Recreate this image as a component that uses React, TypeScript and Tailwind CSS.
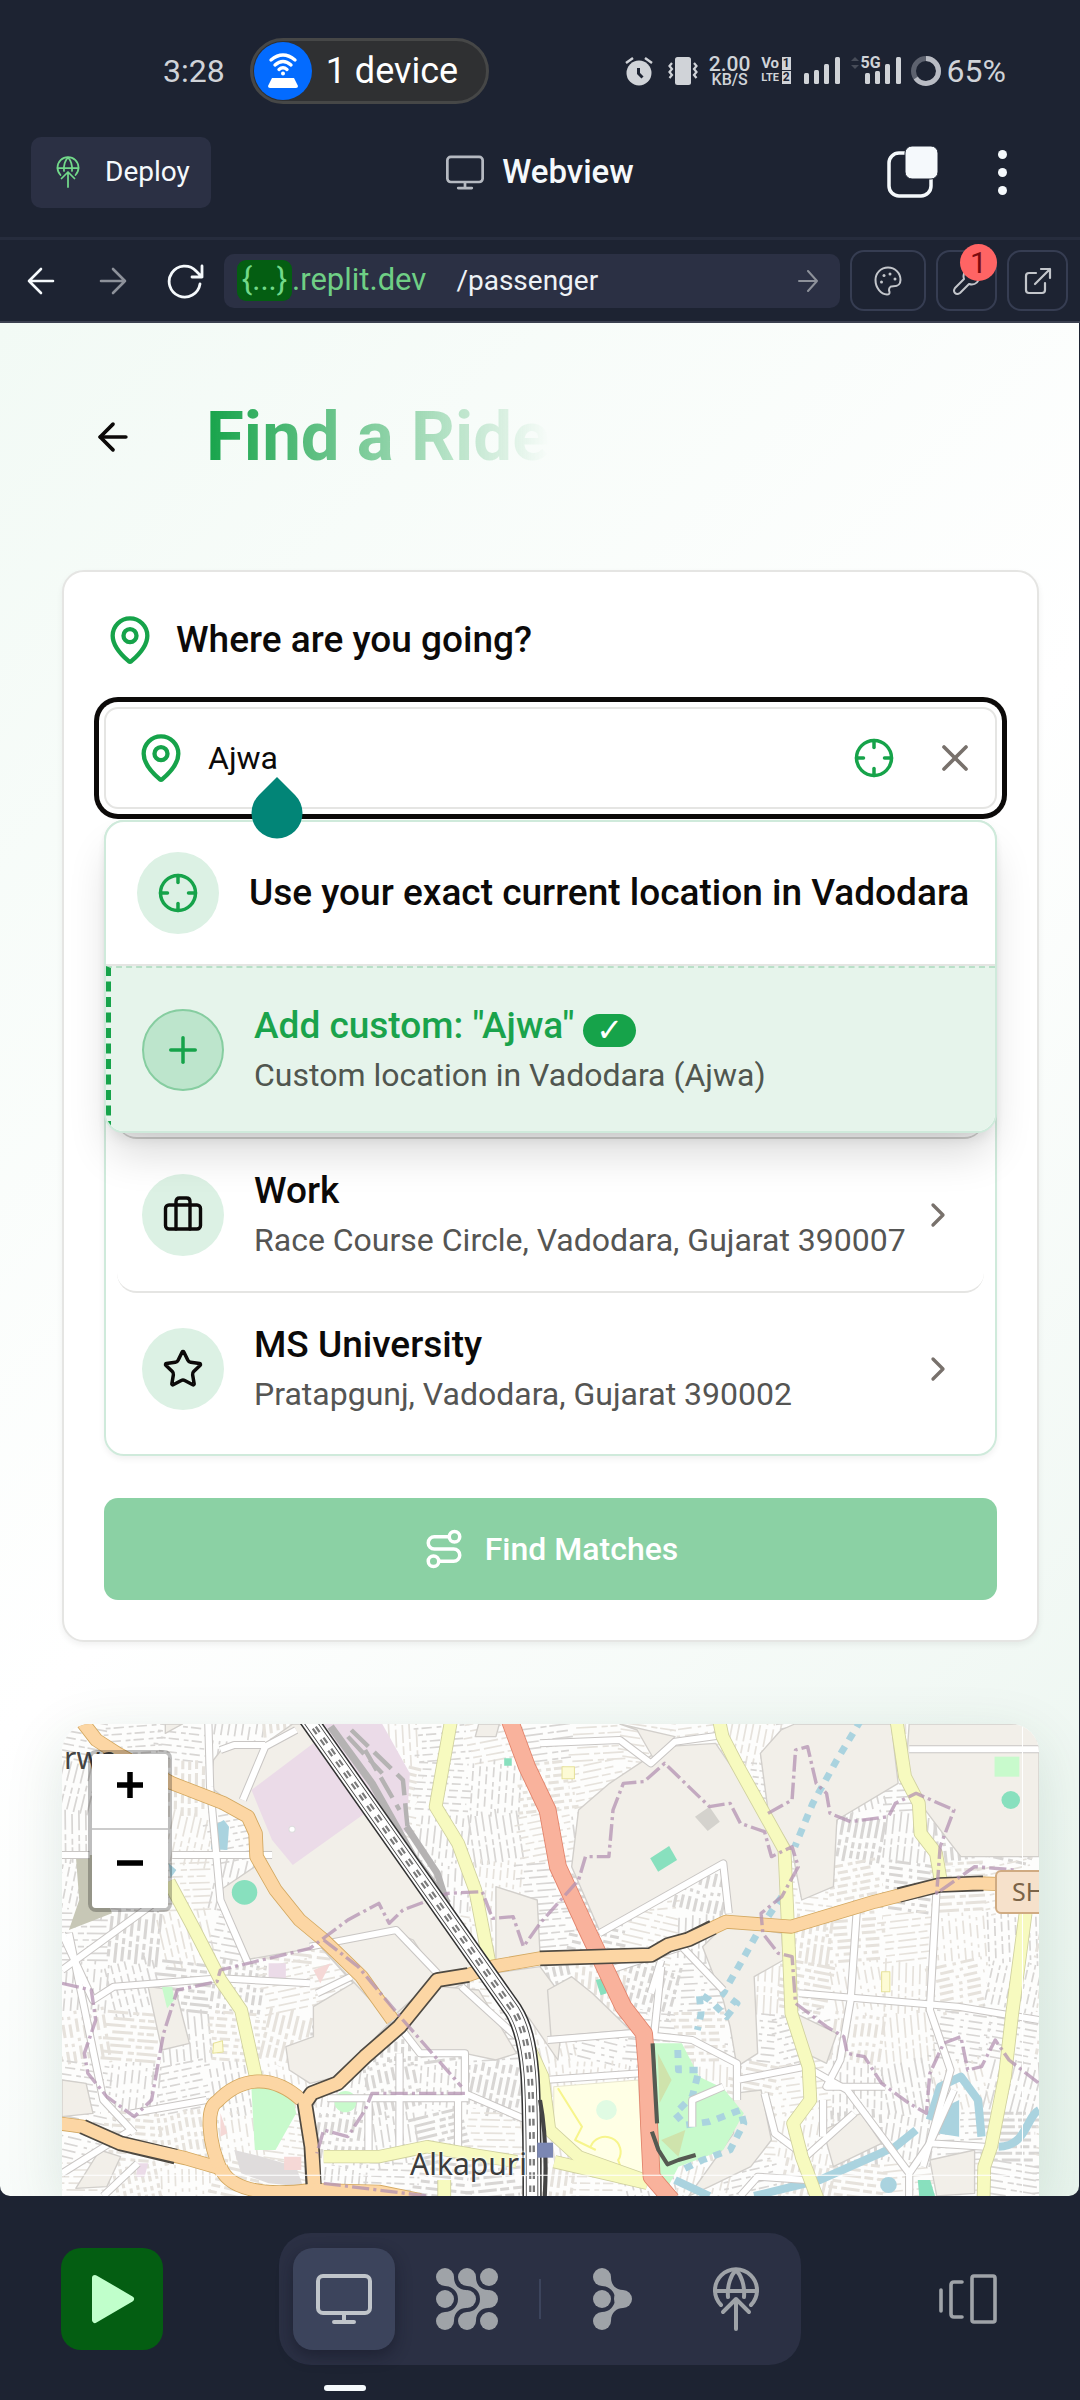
import React from "react";
import {
  ArrowLeft,
  ChevronRight,
  Crosshair,
  MapPin,
  Plus,
  Route,
  Star,
  X,
} from "lucide-react";

/* ---------- icons ---------- */

function MonitorIcon({ className }: { className?: string }) {
  return (
    <svg viewBox="0 0 56 50" className={className} fill="none" stroke="currentColor" strokeWidth="4" strokeLinecap="round">
      <rect x="2" y="2" width="52" height="37" rx="5" />
      <path d="M28 40v7M18 48h20" />
    </svg>
  );
}

function GlobeUpIcon({ className, strokeWidth = 4 }: { className?: string; strokeWidth?: number }) {
  return (
    <svg viewBox="0 0 48 64" className={className} fill="none" stroke="currentColor" strokeWidth={strokeWidth} strokeLinecap="round" strokeLinejoin="round">
      <path d="M9 38A21 21 0 1 1 39 38" />
      <path d="M3 24H45" />
      <path d="M16 30C15 18 19 8 24 3C29 8 33 18 32 30" />
      <path d="M24 62V32M11 45L24 32L37 45" />
    </svg>
  );
}

const FORK = "M18 9C18 18 24 22 30 22V40C24 40 18 44 18 53H9V44A13 13 0 0 0 9 18V9Z";

function ForkIcon() {
  return (
    <svg viewBox="0 0 40 62" className="h-[62px] w-[40px]" fill="currentColor">
      <path d={FORK} />
      <circle cx="9" cy="9" r="9" />
      <circle cx="9" cy="31" r="9" />
      <circle cx="9" cy="53" r="9" />
      <circle cx="30" cy="31" r="9" />
    </svg>
  );
}

function AgentIcon() {
  return (
    <svg viewBox="0 0 62 62" className="h-[62px] w-[62px]" fill="currentColor">
      <path d={FORK} />
      <path d={FORK} transform="translate(22 0)" />
      {[9, 31, 53].map((x) => [9, 31, 53].map((y) => <circle key={x + "-" + y} cx={x} cy={y} r="9" />))}
    </svg>
  );
}

function HotspotIcon() {
  return (
    <svg viewBox="0 0 56 58" className="h-[58px] w-[58px]" fill="none" stroke="#fff" strokeWidth="3.4" strokeLinecap="round">
      <path d="M16 18Q28 8 40 18M20 23Q28 16 36 23M24 27.500Q28 24 32 27.500" />
      <circle cx="28" cy="31.500" r="2" fill="#fff" stroke="none" />
      <path d="M17 36h22l4 8q0 2-2 2H15q-2 0-2-2z" fill="#fff" stroke="none" />
    </svg>
  );
}

function SignalBars() {
  return (
    <svg viewBox="0 0 36 28" className="h-[28px] w-[36px]" fill="currentColor">
      <rect x="0" y="16" width="5" height="11" rx="1.500" />
      <rect x="10" y="13" width="5" height="14" rx="1.500" />
      <rect x="20" y="7" width="5" height="20" rx="1.500" />
      <rect x="31" y="0" width="5" height="27" rx="1.500" />
    </svg>
  );
}

function SuitcaseIcon() {
  return (
    <svg viewBox="0 0 42 42" className="size-[42px]" fill="none" stroke="currentColor" strokeWidth="3.400" strokeLinecap="round" strokeLinejoin="round">
      <rect x="3.500" y="11" width="35" height="24" rx="3.500" />
      <path d="M14 35V7.500Q14 4 17.500 4H24.500Q28 4 28 7.500V35" />
    </svg>
  );
}

/* ---------- phone status bar ---------- */

function StatusBar() {
  return (
    <div className="flex h-[107px] shrink-0 items-center pt-[34px] pr-[74px] pl-[163px] text-[#d0d3d8]">
      <span className="text-[32px] leading-[40px]">3:28</span>
      <div className="ml-[25px] flex h-[66px] items-center rounded-full border-[3px] border-[#464747] bg-[#2f3032] pr-[28px] pl-[1px]">
        <span className="rounded-full bg-[#036bff]">
          <HotspotIcon />
        </span>
        <span className="ml-[14px] text-[36px] leading-[44px] whitespace-nowrap text-white">1 device</span>
      </div>
      <div className="ml-auto flex items-center whitespace-nowrap">
        <svg viewBox="0 0 28 30" className="h-[30px] w-[28px]" fill="none">
          <circle cx="14" cy="17" r="12.500" fill="currentColor" />
          <path d="M1 7L8 2M27 7L20 2" stroke="currentColor" strokeWidth="2.500" />
          <path d="M13.500 12v5.500l4 4" stroke="#1d2332" strokeWidth="3" />
        </svg>
        <svg viewBox="0 0 30 30" className="ml-[15px] h-[30px] w-[30px]" fill="none" stroke="currentColor" strokeWidth="2.200">
          <rect x="7" y="1" width="16" height="28" rx="2.500" fill="currentColor" stroke="none" />
          <path d="M4 7L1.500 10L4 13L1.500 16L4 19L1.500 22M26 7l2.500 3L26 13l2.500 3L26 19l2.500 3" />
        </svg>
        <div className="ml-[10px] flex w-[44px] flex-col items-center font-medium">
          <span className="text-[21px] leading-[18px]">2.00</span>
          <span className="text-[16px] leading-[14px]">KB/S</span>
        </div>
        <div className="ml-[9px] grid grid-cols-[19px_9px] gap-x-[2px] gap-y-[1px] text-center leading-[13px] font-bold">
          <span className="text-[15px]">Vo</span>
          <span className="bg-[#d0d3d8] text-[12px] text-[#1d2332]">1</span>
          <span className="flex justify-center text-[11px]">LTE</span>
          <span className="bg-[#d0d3d8] text-[12px] text-[#1d2332]">2</span>
        </div>
        <span className="ml-[13px]">
          <SignalBars />
        </span>
        <div className="relative ml-[25px]">
          <svg viewBox="0 0 36 28" className="h-[28px] w-[36px]" fill="currentColor">
            <rect x="0" y="16" width="5" height="11" rx="1.500" />
            <rect x="10" y="14" width="5" height="13" rx="1.500" />
            <rect x="20" y="7" width="5" height="20" rx="1.500" />
            <rect x="31" y="0" width="5" height="27" rx="1.500" />
          </svg>
          <span className="absolute -top-[2px] -left-[4px] text-[16px] leading-[16px] font-bold">5G</span>
          <svg viewBox="0 0 8 12" className="absolute top-[0px] -left-[14px] h-[12px] w-[8px]" fill="#474c58">
            <path d="M4 0L8 4H0ZM4 12L8 8H0Z" />
          </svg>
        </div>
        <svg viewBox="0 0 30 30" className="ml-[10px] h-[30px] w-[30px] -rotate-90" fill="none" strokeWidth="5">
          <circle cx="15" cy="15" r="12.500" stroke="#5d626f" />
          <circle cx="15" cy="15" r="12.500" stroke="#b9bcc4" strokeDasharray="51 79" />
        </svg>
        <span className="ml-[6px] text-[32px] leading-[40px]">65%</span>
      </div>
    </div>
  );
}

/* ---------- workspace header ---------- */

function WorkspaceHeader() {
  return (
    <header className="grid h-[133px] shrink-0 grid-cols-[1fr_auto_1fr] items-center border-b-[3px] border-[#262c3d] px-[31px]">
      <button className="flex h-[71px] items-center justify-self-start rounded-[10px] bg-[#2b3044] pr-[21px] pl-[25px] text-[28px] text-[#f5f9fc]">
        <GlobeUpIcon className="h-[32px] w-[24px] text-[#72d98a]" strokeWidth={3.5} />
        <span className="ml-[25px]">Deploy</span>
      </button>
      <div className="flex items-center gap-[18px]">
        <MonitorIcon className="h-[35px] w-[38px] text-[#b5b9c1]" />
        <h2 className="text-[33px] leading-[40px] font-medium text-[#f5f9fc]">Webview</h2>
      </div>
      <div className="mr-[32px] flex items-center justify-self-end text-[#f5f9fc]">
        <button aria-label="Tabs">
          <svg viewBox="0 0 52 52" className="h-[52px] w-[52px]">
            <rect x="2" y="7" width="42" height="43" rx="10" fill="none" stroke="currentColor" strokeWidth="3.500" />
            <rect x="18" y="0" width="33" height="33" rx="7" fill="currentColor" stroke="#1d2332" strokeWidth="1" />
          </svg>
        </button>
        <button aria-label="More" className="ml-[48px] flex w-[30px] flex-col items-center gap-[9px]">
          <span className="size-[9px] rounded-full bg-current" />
          <span className="size-[9px] rounded-full bg-current" />
          <span className="size-[9px] rounded-full bg-current" />
        </button>
      </div>
    </header>
  );
}

function BrowserBar() {
  const tool = "relative flex h-[61px] shrink-0 items-center justify-center rounded-[14px] border-2 border-[#363d52] text-[#c3c6cb]";
  return (
    <nav className="flex h-[83px] shrink-0 items-center border-b-2 border-[#3b4050] pr-[12px] pl-[22px]">
      <button aria-label="Back" className="text-[#f5f9fc]">
        <svg viewBox="0 0 28 28" className="mx-[5px] h-[28px] w-[28px]" fill="none" stroke="currentColor" strokeWidth="2.600" strokeLinecap="round" strokeLinejoin="round">
          <path d="M26 14H2M14 2L2 14L14 26" />
        </svg>
      </button>
      <button aria-label="Forward" className="ml-[34px] text-[#8d919a]">
        <svg viewBox="0 0 28 28" className="mx-[5px] h-[28px] w-[28px]" fill="none" stroke="currentColor" strokeWidth="2.600" strokeLinecap="round" strokeLinejoin="round">
          <path d="M2 14H26M14 2L26 14L14 26" />
        </svg>
      </button>
      <button aria-label="Reload" className="ml-[35px] text-[#f5f9fc]">
        <svg viewBox="0 0 38 36" className="h-[36px] w-[38px]" fill="none" stroke="currentColor" strokeWidth="2.800" strokeLinecap="round" strokeLinejoin="round">
          <path d="M33 21A15.500 15.500 0 1 1 29 8L35 14M35 3V14H25" />
        </svg>
      </button>
      <div className="ml-[19px] flex h-[54px] min-w-0 flex-1 items-center rounded-[10px] bg-[#2b3044] pr-[22px] pl-[13px]">
        <span className="flex h-[41px] w-[55px] items-center justify-center rounded-[9px] bg-[#045e12] text-[31px] text-[#72d98a]">{"{...}"}</span>
        <span className="text-[31px] text-[#6fcf85]">.replit.dev</span>
        <input aria-label="Path" defaultValue="/passenger" className="ml-[30px] min-w-0 flex-1 bg-transparent text-[28px] text-[#eef2f6] outline-none" />
        <button aria-label="Go" className="text-[#8d919a]">
          <svg viewBox="0 0 20 22" className="h-[22px] w-[20px]" fill="none" stroke="currentColor" strokeWidth="2" strokeLinecap="round" strokeLinejoin="round">
            <path d="M1 11H19M10 1L19 11L10 21" />
          </svg>
        </button>
      </div>
      <button aria-label="Theme" className={tool + " ml-[10px] w-[76px]"}>
        <svg viewBox="0 0 28 30" className="h-[30px] w-[28px]" fill="none" stroke="currentColor" strokeWidth="2" strokeLinecap="round" strokeLinejoin="round">
          <path d="M14 1.500C7 1.500 1.500 7 1.500 14C1.500 22 7 28 13 28.500Q16 28.500 15.500 26Q14 22.500 17 20.500C19 19.500 26.500 22 26.500 14C26.500 7 21 1.500 14 1.500Z" />
          <g fill="currentColor" stroke="none">
            <circle cx="7.500" cy="16" r="1.500" />
            <circle cx="10" cy="9.500" r="1.500" />
            <circle cx="16" cy="8" r="1.500" />
            <circle cx="21" cy="13" r="1.500" />
          </g>
        </svg>
      </button>
      <button aria-label="Developer tools, 1 issue" className={tool + " ml-[10px] w-[61px]"}>
        <svg viewBox="0 0 30 30" className="h-[30px] w-[30px]" fill="none" stroke="currentColor" strokeWidth="2" strokeLinecap="round" strokeLinejoin="round">
          <path d="M12 13C10 7 15 1 22 3L18 7V11L23 12L27 8C29 15 23 20 17 18L8 27Q5 29 3 27Q1 25 3 22Z" />
        </svg>
        <span className="absolute -top-[8px] -right-[2px] flex size-[37px] items-center justify-center rounded-full bg-[#ff6464] text-[30px] text-[#7a0b10]">1</span>
      </button>
      <button aria-label="Open in new tab" className={tool + " ml-[10px] w-[61px]"}>
        <svg viewBox="0 0 28 28" className="h-[28px] w-[28px]" fill="none" stroke="currentColor" strokeWidth="2.200" strokeLinecap="round" strokeLinejoin="round">
          <path d="M12 6H5Q2 6 2 9V23Q2 26 5 26H18Q21 26 21 23V16M11 17L26 2M17 2H26V11" />
        </svg>
      </button>
    </nav>
  );
}

/* ---------- search card ---------- */

function Place({
  icon,
  title,
  address,
  last,
}: {
  icon: React.ReactNode;
  title: string;
  address: string;
  last?: boolean;
}) {
  return (
    <button
      className={
        "flex w-full items-center py-[27px] pr-[26px] pl-[25px] text-left " +
        (last ? "" : "rounded-b-[20px] border-b-2 border-[#e5e5e3]")
      }
    >
      <span className="flex size-[82px] shrink-0 items-center justify-center rounded-full bg-[#dcf1e4] text-[#0c0a09]">{icon}</span>
      <span className="ml-[30px] min-w-0 flex-1">
        <span className="block text-[37px] leading-[50px] font-medium text-[#0c0a09]">{title}</span>
        <span className="block text-[32px] leading-[48px] whitespace-nowrap text-[#555553]">{address}</span>
      </span>
      <ChevronRight className="size-[40px] shrink-0 text-[#78716c]" strokeWidth={2} />
    </button>
  );
}

function SearchCard() {
  return (
    <section className="mr-[40px] ml-[62px] rounded-[22px] border-2 border-[#e5e5e3] bg-white p-[40px] shadow-[0_3px_6px_rgba(0,0,0,0.06)]">
      <label htmlFor="destination" className="flex h-[56px] items-center text-[37px] font-medium text-[#0c0a09]">
        <MapPin className="size-[52px] text-[#16a34a]" strokeWidth={2} />
        <span className="ml-[20px]">Where are you going?</span>
      </label>

      <div className="relative mt-[39px] flex h-[102px] items-center rounded-[14px] border-2 border-[#e5e5e3] bg-white pr-[18px] pl-[29px] ring-[5px] ring-[#0c0a09] ring-offset-[5px] ring-offset-white">
        <MapPin className="size-[52px] shrink-0 text-[#16a34a]" strokeWidth={2} />
        <input id="destination" defaultValue="Ajwa" className="ml-[21px] min-w-0 flex-1 text-[32px] text-[#0c0a09] outline-none" />
        <button aria-label="Use my location">
          <Crosshair className="size-[42px] text-[#16a34a]" strokeWidth={2} />
        </button>
        <button aria-label="Clear" className="ml-[38px]">
          <X className="size-[44px] text-[#78716c]" strokeWidth={2} />
        </button>
        <svg viewBox="0 0 52 62" className="absolute top-[68px] left-[145px] z-20 h-[62px] w-[52px]" fill="#028577">
          <path d="M26 0L44 18A25.500 25.500 0 1 1 8 18Z" />
        </svg>
      </div>

      <div className="mt-[11px] rounded-[20px] border-2 border-[#cfeadb] shadow-[0_3px_6px_rgba(0,0,0,0.06)]">
        <div className="relative z-10 -mx-[2px] -mt-[2px] overflow-hidden rounded-[20px] border-2 border-[#cfeadb] bg-white shadow-[0_26px_44px_-8px_rgba(0,0,0,0.16),0_10px_16px_-8px_rgba(0,0,0,0.12)]">
          <button className="flex w-full items-center border-b-2 border-[#e5e5e3] pt-[30px] pr-[20px] pb-[30px] pl-[31px] text-left">
            <span className="flex size-[82px] shrink-0 items-center justify-center rounded-full bg-[#dcf1e4]">
              <Crosshair className="size-[42px] text-[#16a34a]" strokeWidth={2} />
            </span>
            <span className="ml-[30px] text-[37px] leading-[50px] font-medium whitespace-nowrap text-[#0c0a09]">
              Use your exact current location in Vadodara
            </span>
          </button>
          <button className="flex h-[165px] w-full items-center border-t-2 border-l-[5px] border-dashed border-t-[#b9e0c8] border-l-[#16a34a] bg-[#e6f4eb] px-[31px] text-left">
            <span className="flex size-[82px] shrink-0 items-center justify-center rounded-full border-2 border-[#86cda0] bg-[#bde5cc]">
              <Plus className="size-[42px] text-[#16a34a]" strokeWidth={2} />
            </span>
            <span className="ml-[30px]">
              <span className="flex items-end text-[37px] leading-[50px] font-medium text-[#1aa34c]">
                Add custom: "Ajwa"
                <span className="mb-[4px] ml-[9px] flex h-[33px] w-[53px] items-center justify-center rounded-full bg-[#16a34a] font-['DejaVu_Sans'] text-[32px] leading-[33px] font-bold text-white">✓</span>
              </span>
              <span className="block text-[32px] leading-[48px] text-[#50564f]">Custom location in Vadodara (Ajwa)</span>
            </span>
          </button>
        </div>
        <div className="px-[11px] pb-[9px]">
          <div className="-mt-[24px] h-[30px] rounded-b-[20px] border-b-2 border-[#d4d4d2]" />
          <Place icon={<SuitcaseIcon />} title="Work" address="Race Course Circle, Vadodara, Gujarat 390007" />
          <Place icon={<Star className="size-[42px]" strokeWidth={2} />} title="MS University" address="Pratapgunj, Vadodara, Gujarat 390002" last />
        </div>
      </div>

      <button className="mt-[42px] flex h-[102px] w-full items-center justify-center gap-[20px] rounded-[14px] bg-[#8bd1a4] text-[32px] font-medium text-white">
        <Route className="size-[42px]" strokeWidth={2} />
        Find Matches
      </button>
    </section>
  );
}

/* ---------- map ---------- */

function streetTexture() {
  let seed = 20077;
  const rnd = () => {
    seed = (seed * 16807) % 2147483647;
    return seed / 2147483647;
  };
  const blocks: { d: string; dash: string; w: number; c: string }[] = [];
  const dashes = ["26 12 54 10", "14 9 30 14", "60 14 18 8", "10 14 40 18"];
  for (let ty = 40; ty < 1500; ty += 150) {
    for (let tx = 160; tx < 3040; tx += 150) {
      const a = (rnd() < 0.5 ? 0 : Math.PI / 2) + (rnd() - 0.5) * 0.5;
      const dx = Math.cos(a);
      const dy = Math.sin(a);
      let d = "";
      for (let o = -75; o < 75; o += 20) {
        const len = 60 + rnd() * 28;
        const cx = tx + 75 - dy * o;
        const cy = ty + 75 + dx * o;
        d += `M${(cx - dx * len).toFixed(0)} ${(cy - dy * len).toFixed(0)}L${(cx + dx * len).toFixed(0)} ${(cy + dy * len).toFixed(0)}`;
      }
      blocks.push({
        d,
        dash: dashes[Math.floor(rnd() * dashes.length)],
        w: rnd() < 0.3 ? 9 : 5,
        c: rnd() < 0.5 ? "#d8d6d4" : "#e6e2dc",
      });
    }
  }
  return blocks;
}

const TEXTURE = streetTexture();

const OPEN_AREAS = [
  "620,180 650,140 770,130 850,72 900,72 1400,820 1130,970 930,740 760,490 745,370 610,260",
  "640,570 740,500 930,740 710,780 655,650",
  "910,920 1040,840 1130,970 980,1130 900,1150 840,1110 830,1040 910,1010",
  "1170,970 1280,860 1390,870 1500,1060 1440,1080 1350,1060 1200,1050",
  "930,740 1130,690 1200,720 1270,830 1130,960",
  "430,860 510,870 550,1030 470,1050",
  "180,1140 250,1150 270,1240 180,1250",
  "290,1350 350,1370 310,1460 220,1465",
  "480,72 530,72 480,100",
  "1390,72 1450,72 1440,110 1380,110",
  "1430,820 1568,800 1640,900 1620,1080 1540,960",
  "1440,560 1560,600 1568,760 1440,780",
  "1770,250 1930,140 2078,130 2288,450 2278,680 2108,650 2104,490 1740,690 1660,500 1680,330",
  "1800,72 1960,110 1900,180 1850,90",
  "2208,160 2268,90 2308,72 2588,72 2608,250 2430,360 2420,560 2328,600 2300,450 2230,330",
  "2640,72 3017,72 3017,470 2790,470 2738,400 2628,250",
  "2040,740 2110,670 2270,700 2275,780 2190,830 2200,1060 2140,1100 2120,980 2100,900",
  "1590,870 1660,830 1720,880 1830,990 1600,1010",
  "2130,1180 2210,1170 2240,1320 2180,1400 2060,1460 2000,1488 2130,1300",
  "2390,1290 2500,1240 2560,1330 2420,1400",
  "2310,940 2430,1000 2400,1090 2340,1060",
  "2700,1380 2830,1350 2830,1480 2720,1488",
];

const WHITE_ROADS = [
  "M605 72L610 260L640 600L720 790",
  "M860 90L770 140L705 300M640 150L680 135H770",
  "M180 465H260M500 465H790",
  "M180 700L270 900L330 860L640 835L900 850",
  "M180 810L460 600",
  "M200 700L300 1200L390 1300",
  "M900 740L1150 690L1270 820",
  "M920 880L1020 830",
  "M380 1240L600 1200",
  "M1160 980L1220 1060H1350V1180L1530 1260M1160 1060V1360M950 1195H1360",
  "M1330 1200V1340M1070 1200V1350",
  "M180 1420L380 1290M300 1488L400 1390",
  "M1340 860L1500 1010",
  "M1568 130L1800 120L1890 190L1960 125L2100 105",
  "M2640 148H3017",
  "M1740 700L2100 490L2116 640",
  "M1740 820L1980 740L2100 870",
  "M1590 1020L1830 1000L2010 1020L2140 1090V1200M2140 1140L2340 1100L2460 1170L2640 1420",
  "M1580 1140L1860 1120",
  "M2010 1280V1200L2100 1160",
  "M2320 880L2780 920L3017 960",
  "M2490 600L2470 900L2440 1080L2400 1160H2570",
  "M2720 560L2700 930L2760 1110L2680 1400",
  "M2220 1180L2250 1300L2340 1370L2480 1240",
  "M2390 1200V1310",
  "M1890 880L1920 780M1900 1000L1920 800",
  "M2640 1420L2700 1330L2860 1340M2700 1330L2770 1170M2640 1420V1488",
  "M2150 1488L2200 1430L2340 1440",
];

const YELLOW_ROADS = [
  "M490 545L560 680L640 840L700 930L745 1140",
  "M1310 60L1265 320L1330 430L1380 570L1425 810",
  "M2088 60L2098 110L2138 190L2278 450L2288 680L2298 940L2348 1100L2353 1200L2303 1270L2328 1370L2375 1500",
  "M2603 60L2628 230L2668 310L2673 400L2718 460L2733 550",
  "M2978 640L2938 950L2918 1130L2878 1340L2858 1400L2856 1500",
  "M940 1370H1100L1240 1340L1380 1365L1500 1385",
  "M1500 960L1575 1130L1595 1290L1680 1370L1870 1440",
  "M1610 1385L1880 1450",
  "M1290 1440V1488",
];

const ORANGE_ROADS = [
  "M235 60L280 120L340 160L500 250L650 310L720 350L742 400L745 470L800 570L870 660L940 720L1050 830L1140 960",
  "M915 1500L905 1340L885 1210L905 1180L980 1150L1060 1070L1160 980L1270 840L1360 825L1430 800L1568 775L1890 765L1940 735L2000 718L2108 665L2298 680L2540 605L2728 555L2840 550L2900 552",
  "M170 1270L240 1280L350 1330L540 1375L640 1405",
  "M645 1420C600 1320 600 1220 630 1205C700 1130 790 1120 875 1200",
  "M640 1400C660 1465 760 1490 900 1470L1100 1475L1220 1500",
];

const ORANGE_BRIDGES = [
  "M912 1488L905 1340L885 1210L905 1180L980 1150L1060 1070L1160 980L1270 840L1360 825",
  "M1568 775L1890 765L1940 735L2000 718L2070 682",
  "M240 1280L350 1330L510 1370",
  "M2610 585L2728 555L2855 550",
];

const BOUNDARIES = [
  "M180 850L265 870L278 960L245 1060L255 1120L310 1190L390 1250L440 1200L475 1000L515 870L630 845L640 810L900 745L1010 660L1100 610L1130 670L1170 630L1300 580L1400 575L1430 655L1490 650L1520 740L1568 670L1680 540L1700 470H1768L1780 330L1810 250L1870 245L1930 190L2060 320L2120 310L2150 370L2220 395L2240 470L2300 440L2318 500L2270 590L2210 640L2215 700L2260 760L2300 770L2310 910L2400 980L2450 1010L2460 1060L2510 1070L2560 1150L2640 1210L2690 1240L2700 1120L2740 1030L2790 1010L2810 1110L2850 1100L2890 1020L2930 1080L3017 1150",
  "M940 720L1040 800L1170 960L1340 1160M1350 1180H1080L1060 1230L1010 1310L940 1290L920 1360",
  "M2230 340L2300 300L2310 150L2345 140L2370 250L2400 280L2410 340L2470 365L2580 350L2600 310L2660 280L2770 330L2730 440L2720 580L2830 500L2950 510",
  "M940 1450L1240 1488",
];

const RAIL = "M890 50L1490 930C1545 1020 1545 1150 1545 1500";
const HIGHWAY =
  "M1480 60L1530 200L1590 330L1620 500L1700 680L1810 920L1870 1000L1878 1100L1885 1280L1892 1430L1950 1500";

function Lines({ paths, color, width, dash }: { paths: string[]; color: string; width: number; dash?: string }) {
  return (
    <g stroke={color} strokeWidth={width} strokeDasharray={dash}>
      {paths.map((d) => (
        <path key={d} d={d} />
      ))}
    </g>
  );
}

function CityMap() {
  return (
    <svg viewBox="180 72 2837 1416" preserveAspectRatio="none" className="absolute inset-0 h-full w-full" fill="none" strokeLinejoin="round">
      <rect x="180" y="72" width="2837" height="1416" fill="#fdfdfc" />
      {TEXTURE.map((t, i) => (
        <path key={i} d={t.d} stroke={t.c} strokeWidth={t.w} strokeDasharray={t.dash} />
      ))}
      <g fill="#f2efe9" stroke="#d2cfcb" strokeWidth="4">
        {OPEN_AREAS.map((p) => (
          <polygon key={p} points={p} />
        ))}
      </g>
      <polygon points="220,465 270,465 325,640 200,690 230,600" fill="#c7c7b6" />
      <g fill="#ebdbe8">
        <polygon points="730,270 910,130 1060,340 850,495 790,420" />
        <polygon points="940,72 1110,72 1190,220 1180,400 1130,360" />
        <path d="M780 790h50v50h-50zM400 1390l30 0-10 40h-25z" />
      </g>
      <circle cx="848" cy="388" r="9" fill="#fff" stroke="#ddd" strokeWidth="3" />
      <g stroke="#b5b3b3" strokeWidth="13">
        <path d="M960 80L1080 250L1200 470L1300 610" strokeWidth="22" />
        <path d="M1020 90L1170 240L1185 400M1060 150L1160 330M1010 110L1110 220" strokeDasharray="70 24" />
        <path d="M1180 380L1270 520L1300 620" strokeWidth="20" />
      </g>
      <g fill="#c8facc">
        <polygon points="730,1165 790,1160 850,1190 860,1240 800,1350 740,1350" />
        <circle cx="1003" cy="1205" r="32" />
        <polygon points="470,860 500,860 506,900 485,925" />
        <polygon points="1900,1030 1980,1030 2030,1130 2100,1165 2160,1240 2100,1350 1970,1400 1940,1460 1900,1440" />
        <rect x="2888" y="170" width="72" height="60" />
      </g>
      <path d="M1910 1060L1950 1140L1915 1210ZM1920 1320L1990 1290L1970 1370Z" fill="#cfe3ac" />
      <g fill="#88e0be">
        <circle cx="710" cy="577" r="37" />
        <polygon points="1888,475 1943,438 1966,480 1911,515" />
        <circle cx="2935" cy="300" r="27" />
        <path d="M2665 1440h36l14 48h-46zM1730 840l24 -6 8 46-18 6zM1464 175h22v22h-22z" />
      </g>
      <polygon points="1608,1160 1853,1140 1870,1440 1788,1410 1608,1310" fill="#ffffe5" stroke="#e9e6cf" strokeWidth="3" />
      <circle cx="1761" cy="1230" r="30" fill="#e0fbe3" />
      <path d="M1620 1165L1690 1280L1670 1320L1730 1350M1715 1340a45 45 0 1 1 80 40l10 30" stroke="#f7f58c" strokeWidth="6" />
      <path d="M1632 200h36v36h-36zM2560 815h24v60h-24zM620 1030l26-8 2 34-30 4z" fill="#fdfbd5" stroke="#e6e19a" strokeWidth="3" />
      <polygon points="680,1350 760,1370 860,1400 880,1460 780,1450 700,1420" fill="#dfdcdc" />
      <path d="M640 1240l20 60-20 10zM825 1370h50v40h-50zM910 810l50-20-30 60z" fill="#f5d8d6" />
      <polygon points="2018,350 2060,320 2090,365 2055,393" fill="#d4d2cd" />
      <g fill="#aad3df">
        <polygon points="615,380 650,360 665,380 660,450 613,448" />
        <polygon points="490,490 512,510 495,535" />
        <polygon points="2720,1300 2755,1215 2785,1200 2785,1310" />
        <circle cx="2580" cy="1455" r="24" />
      </g>
      <g stroke="#aad3df" strokeWidth="24">
        <path d="M2190 1488L2380 1440L2600 1340L2660 1290M2700 1260L2730 1160L2790 1130L2840 1200L2850 1310M2900 1340C2980 1340 2980 1250 3017 1230M1960 1440L2060 1488" />
        <path d="M2500 60L2430 180L2360 310L2308 440M2270 590L2210 680L2150 790L2100 880L2140 910L2110 950L2060 900L2030 880L2036 940L2025 990" strokeWidth="20" strokeDasharray="24 22" />
        <path d="M1968 1050L1970 1110L2030 1110L2010 1190L1960 1240L1990 1275L2060 1265L2150 1230L2160 1270L2120 1350L2040 1380L1980 1410" strokeWidth="20" strokeDasharray="24 22" />
      </g>
      <Lines paths={WHITE_ROADS} color="#c9c6c4" width={24} />
      <Lines paths={WHITE_ROADS} color="#ffffff" width={18} />
      <Lines paths={YELLOW_ROADS} color="#d0d19f" width={40} />
      <Lines paths={YELLOW_ROADS} color="#f7fabf" width={35} />
      <path d={HIGHWAY} stroke="#e2836b" strokeWidth="52" />
      <path d={HIGHWAY} stroke="#f9b29c" strokeWidth="47" />
      <Lines paths={ORANGE_ROADS} color="#d3a860" width={42} />
      <Lines paths={ORANGE_BRIDGES} color="#4f4a42" width={47} />
      <Lines paths={ORANGE_ROADS} color="#fcd6a4" width={37} />
      <path d="M1895 1030L1908 1270M1893 1295L1912 1350L1938 1393L1970 1380L2020 1365" stroke="#555a52" strokeWidth="12" />
      <g strokeOpacity="0.75">
        <Lines paths={BOUNDARIES} color="#b391b2" width={10} dash="50 12 9 12" />
      </g>
      <path d={RAIL} stroke="#333" strokeWidth="56" />
      <path d={RAIL} stroke="#fff" strokeWidth="47" />
      <path d={RAIL} stroke="#444" strokeWidth="36" />
      <path d={RAIL} stroke="#fff" strokeWidth="31" />
      <path d={RAIL} stroke="#7a7a7a" strokeWidth="17" strokeDasharray="20 20" />
      <path d={RAIL} stroke="#fff" strokeWidth="4" />
      <path d="M1568 1200Q1590 1320 1582 1488" stroke="#444" strokeWidth="12" />
      <path d="M2969 72V1488M180 1426H3017" stroke="#fff" strokeWidth="3" />
      <rect x="1560" y="1328" width="46" height="45" fill="#7b87b3" />
    </svg>
  );
}

function MapPanel() {
  return (
    <section className="relative mt-[82px] mr-[40px] ml-[62px] min-h-0 flex-1 overflow-hidden rounded-t-[28px] shadow-[0_16px_60px_rgba(20,70,45,0.12)]">
      <CityMap />
      <span className="absolute top-[16px] left-[2px] font-['Noto_Sans'] text-[30px] leading-[36px] text-[#444]">rwa</span>
      <span className="absolute top-[422px] left-[348px] font-['Noto_Sans'] text-[30px] leading-[36px] text-[#3c3c3c] [text-shadow:0_0_3px_#fff,0_0_3px_#fff]">Alkapuri</span>
      <span className="absolute top-[146px] -right-[30px] flex h-[44px] w-[74px] items-center rounded-[6px] border-2 border-[#d0ab82] bg-[#f6e1cb] pl-[15px] font-['Noto_Sans'] text-[25px] text-[#7b6448]">SH</span>
      <div className="absolute top-[26px] left-[26px] w-[84px] rounded-[8px] border-4 border-black/25 bg-clip-padding">
        <button aria-label="Zoom in" className="flex h-[76px] w-full items-center justify-center rounded-t-[4px] border-b-2 border-[#ccc] bg-white pb-[12px]">
          <svg viewBox="0 0 26 26" className="size-[26px]" stroke="#000" strokeWidth="5.500">
            <path d="M13 0V26M0 13H26" />
          </svg>
        </button>
        <button aria-label="Zoom out" className="flex h-[78px] w-full items-center justify-center rounded-b-[4px] bg-white pb-[12px]">
          <svg viewBox="0 0 26 26" className="size-[26px]" stroke="#000" strokeWidth="5.500">
            <path d="M0 13H26" />
          </svg>
        </button>
      </div>
    </section>
  );
}

/* ---------- bottom dock ---------- */

function Dock() {
  const slot = "flex size-[102px] shrink-0 items-center justify-center rounded-[20px]";
  return (
    <footer className="relative flex h-[204px] shrink-0 items-center justify-between px-[61px] pt-[2px] text-[#9fa3a8]">
      <button aria-label="Run" className={slot + " bg-[#045e12]"}>
        <svg viewBox="0 0 44 50" className="ml-[2px] h-[50px] w-[44px]" fill="#c0ffcb" stroke="#c0ffcb" strokeWidth="6" strokeLinejoin="round">
          <path d="M4 4L40 25L4 46Z" />
        </svg>
      </button>
      <div className="flex h-[132px] items-center gap-[21px] rounded-[32px] bg-[#2b3044] px-[14px]">
        <button aria-label="Webview" className={slot + " bg-[#3c445c] text-[#c0c5ca] shadow-[0_6px_16px_rgba(15,18,30,0.45)]"}>
          <MonitorIcon className="h-[50px] w-[56px]" />
        </button>
        <button aria-label="Agent" className={slot}>
          <AgentIcon />
        </button>
        <span className="h-[40px] w-[2px] bg-[#3c445c]" />
        <button aria-label="Assistant" className={slot}>
          <ForkIcon />
        </button>
        <button aria-label="Deployments" className={slot}>
          <GlobeUpIcon className="h-[64px] w-[48px]" />
        </button>
      </div>
      <button aria-label="Switch tab" className={slot}>
        <svg viewBox="0 0 58 50" className="h-[50px] w-[58px]" fill="none" stroke="currentColor" strokeWidth="3.600" strokeLinecap="round" strokeLinejoin="round">
          <rect x="33" y="2" width="23" height="46" rx="2" />
          <path d="M23 8H15Q12 8 12 11V40Q12 43 15 43H23M2 16V37" />
        </svg>
      </button>
      <span className="absolute bottom-[9px] left-[30%] h-[6px] w-[42px] rounded-full bg-[#f5f9fc]" />
    </footer>
  );
}

export default function App() {
  return (
    <div className="flex h-screen flex-col overflow-hidden bg-[#1d2332] font-[Roboto,sans-serif]">
      <StatusBar />
      <WorkspaceHeader />
      <BrowserBar />
      <main className="mr-[1px] flex min-h-0 flex-1 flex-col overflow-hidden rounded-b-[10px] bg-[linear-gradient(135deg,#f2faf5_0%,#ffffff_48%,#e8f4ed_100%)]">
        <div className="mb-[82px] flex items-center gap-[42px] pt-[63px] pl-[62px]">
          <button aria-label="Go back" className="flex size-[102px] items-center justify-center">
            <ArrowLeft className="size-[44px] text-[#0c0a09]" strokeWidth={2} />
          </button>
          <h1 className="bg-linear-to-r from-[#16a34a] to-transparent bg-clip-text text-[69px] leading-[80px] font-bold text-transparent">Find a Ride</h1>
        </div>
        <SearchCard />
        <MapPanel />
      </main>
      <Dock />
    </div>
  );
}
